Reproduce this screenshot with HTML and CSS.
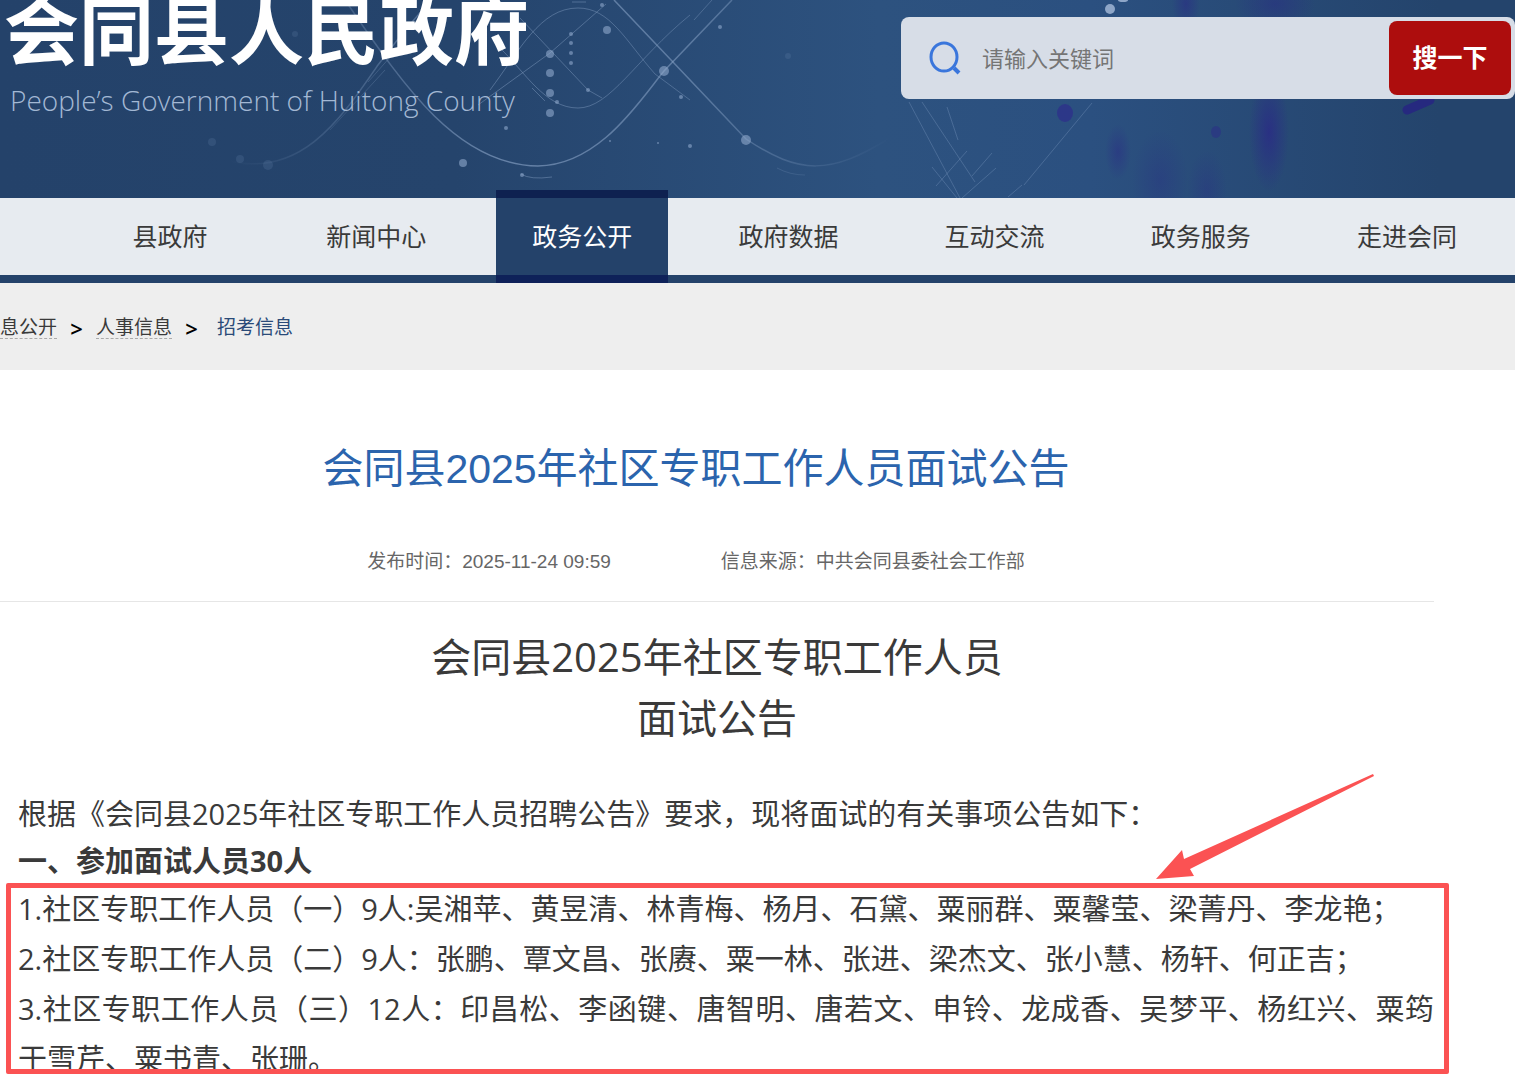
FILE: index.html
```
<!DOCTYPE html>
<html lang="zh-CN">
<head>
  <meta charset="UTF-8">
  <title>会同县2025年社区专职工作人员面试公告</title>
  <link rel="stylesheet" href="styles.css">
</head>
<body>
  <header class="header">
    <svg class="header-bg" viewBox="0 0 1515 198" preserveAspectRatio="xMidYMin slice" aria-hidden="true">
      <defs>
        <radialGradient id="streak">
          <stop offset="0" stop-color="#2a2a86" stop-opacity="0.8"/>
          <stop offset="0.5" stop-color="#2a2a86" stop-opacity="0.4"/>
          <stop offset="1" stop-color="#2a2a86" stop-opacity="0"/>
        </radialGradient>
        <linearGradient id="fade" gradientUnits="userSpaceOnUse" x1="230" y1="0" x2="890" y2="0">
          <stop offset="0" stop-color="#8fa9cc" stop-opacity="0"/>
          <stop offset="0.4" stop-color="#8fa9cc" stop-opacity="0.6"/>
          <stop offset="0.7" stop-color="#8fa9cc" stop-opacity="0.5"/>
          <stop offset="1" stop-color="#8fa9cc" stop-opacity="0"/>
        </linearGradient>
      </defs>
      <!-- 波浪线 -->
      <g fill="none" stroke="url(#fade)" stroke-width="1.5">
        <path d="M225 160C300 180 340 120 378 65C400 36 418 14 432 0"/>
        <path d="M345 0C400 80 455 165 538 166C600 165 640 100 664 71L732 0"/>
        <path d="M614 0L672 61L746 139C800 175 830 175 890 138"/>
      </g>
      <g fill="none" stroke="url(#fade)" stroke-width="1" stroke-opacity="0.7">
        <path d="M490 90C520 50 540 8 578 8C610 8 625 40 655 74L690 100"/>
        <path d="M500 48C525 72 545 108 578 108C610 108 635 60 690 15"/>
        <path d="M520 18L588 90L602 98"/>
        <path d="M478 105L550 53L606 4"/>
        <path d="M330 130L385 70M368 82L392 55M694 20L712 0M532 88L545 101"/>
        <path d="M521 174Q530 180 552 177M572 2h14M777 168Q790 175 805 175"/>
      </g>
      <g stroke="#8fa9cc" stroke-opacity="0.3" stroke-width="1" fill="none">
        <path d="M909 102L960 198M922 102L975 182M932 167L957 198M947 107L958 140"/>
        <path d="M936 186L967 151M972 176L992 153M962 198L996 168M1024 185L1092 103M1008 197L1022 185"/>
      </g>
      <!-- 光点 -->
      <g fill="#8fa9cc" fill-opacity="0.6">
        <circle cx="550" cy="54" r="4"/><circle cx="550" cy="73" r="4"/>
        <circle cx="550" cy="93" r="4"/><circle cx="550" cy="113" r="4"/>
        <circle cx="607" cy="30" r="4"/><circle cx="664" cy="71" r="5"/>
        <circle cx="746" cy="140" r="5"/><circle cx="463" cy="163" r="4"/>
        <circle cx="571" cy="34" r="2"/><circle cx="571" cy="43" r="2"/>
        <circle cx="571" cy="53" r="2"/><circle cx="571" cy="63" r="2"/>
        <circle cx="588" cy="90" r="2"/><circle cx="602" cy="5" r="2"/>
        <circle cx="690" cy="146" r="2"/><circle cx="720" cy="27" r="2"/>
        <circle cx="506" cy="128" r="2"/><circle cx="522" cy="175" r="2"/>
        <circle cx="610" cy="141" r="1"/><circle cx="658" cy="143" r="1"/>
        <circle cx="681" cy="97" r="2"/><circle cx="557" cy="102" r="2"/>
      </g>
      <g fill="#6f8bb5" fill-opacity="0.2">
        <circle cx="268" cy="165" r="5"/><circle cx="240" cy="159" r="4"/>
        <circle cx="212" cy="142" r="4"/><circle cx="295" cy="34" r="3"/><circle cx="788" cy="56" r="3"/>
      </g>
      <circle cx="1110" cy="9" r="5" fill="#8ea6c8"/>
      <ellipse cx="1123" cy="0" rx="5" ry="2" fill="#8ea6c8"/>
      <!-- 紫色光柱 -->
      <g fill="url(#streak)">
        <ellipse cx="1269" cy="132" rx="20" ry="60"/>
        <ellipse cx="1207" cy="132" rx="10" ry="8" opacity="0"/>
        <ellipse cx="1118" cy="152" rx="13" ry="28" opacity="0.6"/>
        <ellipse cx="1160" cy="180" rx="28" ry="50" opacity="0.4"/>
        <ellipse cx="1207" cy="190" rx="20" ry="40" opacity="0.4"/>
        <ellipse cx="1186" cy="4" rx="14" ry="26" opacity="0.7"/>
        <ellipse cx="1275" cy="4" rx="40" ry="26" opacity="0.6"/>
      </g>
      <ellipse cx="1065" cy="113" rx="8" ry="9" fill="#2d2c8c" fill-opacity="0.7"/>
      <ellipse cx="1216" cy="132" rx="5" ry="6" fill="#2b3585" fill-opacity="0.7"/>
      <path d="M1407 110L1430 100" stroke="#26297f" stroke-width="9" stroke-linecap="round"/>
    </svg>
    <div class="brand">
      <div class="brand-name">会同县人民政府</div>
      <div class="brand-en">People’s Government of Huitong County</div>
    </div>
    <form class="search">
      <label class="search-label" for="keyword" aria-label="请输入关键词">
        <svg width="34" height="34" viewBox="0 0 34 34" fill="none" stroke="#3a76dc">
          <ellipse cx="16" cy="16" rx="13" ry="14" stroke-width="3"/>
          <path d="M26 27L31 32" stroke-width="4"/>
        </svg>
      </label>
      <input class="search-input" id="keyword" type="text" placeholder="请输入关键词">
      <button class="search-btn" type="submit">搜一下</button>
    </form>
  </header>

  <nav class="nav">
    <a href="#">县政府</a>
    <a href="#">新闻中心</a>
    <a href="#" class="active">政务公开</a>
    <a href="#">政府数据</a>
    <a href="#">互动交流</a>
    <a href="#">政务服务</a>
    <a href="#">走进会同</a>
  </nav>

  <div class="crumbs">
    <a href="#">息公开</a>
    <span class="sep">&gt;</span>
    <a href="#">人事信息</a>
    <span class="sep">&gt;</span>
    <a href="#" class="current">招考信息</a>
  </div>

  <main class="article">
    <div class="article-head">
      <h1>会同县2025年社区专职工作人员面试公告</h1>
      <div class="meta">
        <span>发布时间：2025-11-24 09:59</span>
        <span>信息来源：中共会同县委社会工作部</span>
      </div>
    </div>
    <h2>会同县2025年社区专职工作人员<br>面试公告</h2>
    <div class="content">
      <p>根据《会同县2025年社区专职工作人员招聘公告》要求，现将面试的有关事项公告如下：</p>
      <h3>一、参加面试人员30人</h3>
    </div>
    <div class="marked">
      <svg class="arrow" width="218" height="106" viewBox="0 0 218 106" aria-hidden="true">
        <path d="M0 105L26 76L28 85L217 0L218 2L34 95L38 102Z" fill="#fb5253"/>
      </svg>
      <div class="names">
        <p>1.社区专职工作人员（一）9人:吴湘苹、黄昱清、林青梅、杨月、石黛、粟丽群、粟馨莹、梁菁丹、李龙艳；</p>
        <p>2.社区专职工作人员（二）9人：张鹏、覃文昌、张赓、粟一林、张进、梁杰文、张小慧、杨轩、何正吉；</p>
        <p>3.社区专职工作人员（三）12人：印昌松、李函键、唐智明、唐若文、申铃、龙成香、吴梦平、杨红兴、粟筠于雪芹、粟书青、张珊。</p>
      </div>
    </div>
  </main>
</body>
</html>
```

FILE: styles.css
```
* {
  box-sizing: border-box;
}
body {
  margin: 0;
  background-color: #fff;
  color: #3a3a3a;
  font-family: "Open Sans", "Noto Sans CJK SC", sans-serif;
  overflow: hidden;
}
h1, h2, h3, p {
  margin: 0;
  font-weight: normal;
}
a {
  color: inherit;
  text-decoration: none;
}

/* 顶部 */
.header {
  position: relative;
  display: flex;
  justify-content: space-between;
  align-items: flex-start;
  height: 198px;
  overflow: hidden;
  background: linear-gradient(to right, #24426a 0%, #25446c 30%, #2d527f 58%, #2b5080 72%, #24446c 95%);
}
.header-bg {
  position: absolute;
  top: 0;
  left: 0;
  width: 100%;
  height: 100%;
}
.brand {
  position: relative;
  padding-left: 4px;
  color: #fff;
  white-space: nowrap;
}
.brand-name {
  font-size: 75px;
  font-weight: bold;
  line-height: 60px;
}
.brand-en {
  padding: 21px 0 0 6px;
  font-size: 28px;
  font-weight: 300;
  line-height: 38px;
  color: #a3b8d4;
}
.search {
  position: relative;
  display: flex;
  align-items: center;
  width: 614px;
  height: 82px;
  margin-top: 17px;
  padding: 4px;
  border-radius: 8px;
  background-color: #d7dde7;
}
.search-label {
  display: flex;
  padding: 0 20px 0 23px;
}
.search-input {
  flex: 1;
  min-width: 0;
  padding: 0;
  border: none;
  outline: none;
  background: none;
  font-family: inherit;
  font-size: 22px;
}
.search-input::placeholder {
  color: #757575;
}
.search-btn {
  width: 122px;
  height: 74px;
  padding: 0 0 4px;
  border: none;
  border-radius: 8px;
  background-color: #ad0d0d;
  color: #fff;
  font-family: inherit;
  font-size: 25px;
  font-weight: bold;
}

/* 导航 */
.nav {
  position: relative;
  display: flex;
  justify-content: space-between;
  height: 85px;
  padding: 0 22px 0 84px;
  border-bottom: 8px solid #24426a;
  background-color: #e7ebf0;
}
.nav a {
  width: 172px;
  font-size: 25px;
  line-height: 77px;
  text-align: center;
}
.nav a.active {
  height: 93px;
  margin-top: -8px;
  border-top: 8px solid #0e2150;
  border-bottom: 8px solid #0e2159;
  background-color: #24426a;
  color: #fff;
}

.crumbs {
  display: flex;
  align-items: center;
  height: 87px;
  padding-top: 2px;
  background-color: #eee;
  font-size: 19px;
  line-height: 22px;
}
.crumbs a {
  border-bottom: 1px dashed #aaa;
}
.crumbs a.current {
  margin-left: 6px;
  border-bottom-color: transparent;
  color: #2a4a78;
}
.crumbs .sep {
  width: 39px;
  color: #000;
  font-size: 22px;
  font-weight: 600;
  text-align: center;
}

/* 正文 */
.article {
  margin-right: 81px;
}
.article-head {
  padding: 69px 42px 24px 0;
  border-bottom: 1px solid #e6e6e6;
  font-family: "Liberation Sans", "Noto Sans CJK SC", sans-serif;
  text-align: center;
}
.article-head h1 {
  font-size: 41px;
  line-height: 60px;
  color: #2b64ad;
}
.meta {
  display: flex;
  justify-content: center;
  gap: 110px;
  margin-top: 48px;
  font-size: 19px;
  line-height: 30px;
  color: #666;
}
h2 {
  margin-top: 24px;
  font-size: 40px;
  line-height: 61px;
  text-align: center;
}
.content {
  padding: 41px 0 0 18px;
  font-size: 29px;
}
.content p {
  line-height: 49px;
}
.content h3 {
  font-size: 29px;
  font-weight: bold;
  line-height: 45px;
}

/* 红框标注 */
.marked {
  position: relative;
  margin: 0 -15px 0 6px;
  border: 5px solid #fb5253;
  border-radius: 2px;
}
.names {
  max-height: 181px;
  padding: 0 10px 0 7px;
  overflow: hidden;
  font-size: 29px;
  line-height: 50px;
  text-align: justify;
}
.names p:first-child {
  margin-top: -4px;
}
.arrow {
  position: absolute;
  top: -114px;
  right: 70px;
}
```
